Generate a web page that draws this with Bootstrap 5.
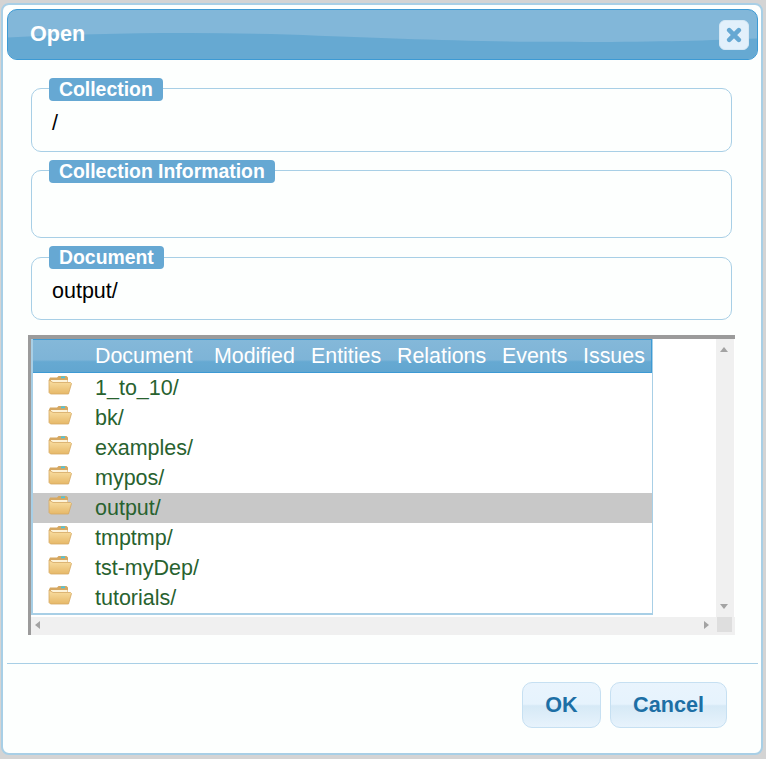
<!DOCTYPE html>
<html lang="en">
<head>
    <meta charset="UTF-8">
    <title>Open</title>
    <link href="https://cdn.jsdelivr.net/npm/bootstrap@5.3.0/dist/css/bootstrap.min.css" rel="stylesheet">
    <style>
        html, body { height: 759px; overflow: hidden; }
        body {
            background: #d4d4d4;
            font-family: "Liberation Sans", Arial, sans-serif;
            padding: 3px 3px 4px 1px;
        }
        .dialog-box {
            height: 752px;
            background: #fdfffe;
            border: 2px solid #a8cfe6;
            border-radius: 8px;
            padding: 4px 3px 0 4px;
        }
        .title-bar {
            position: relative;
            height: 51px;
            border: 1px solid #3d9ad4;
            border-radius: 10px;
            overflow: hidden;
            background: #82b7d9;
            color: #fff;
            font-size: 21.6px;
            font-weight: 700;
            padding: 0 8px 0 22px;
        }
        .title-wave { position: absolute; left: 0; top: 0; width: 100%; height: 100%; }
        .title-bar > span, .close-btn { position: relative; }
        .close-btn {
            width: 30px;
            height: 30px;
            padding: 0;
            border: 1px solid #d5e8f5;
            border-radius: 6px;
            background: #e2f0fb;
        }
        .field-box {
            margin: 0 26px 7px 24px;
            border: 1px solid #a8cfe6;
            border-radius: 10px;
            padding: 0 20px;
            font-size: 21.5px;
            color: #000;
        }
        .field-box legend {
            position: relative;
            top: 1px;
            float: none;
            width: auto;
            height: 23px;
            margin: 2px 0 0 -3px;
            padding: 0 10px;
            background: #66a8d3;
            border-radius: 4px;
            color: #fff;
            font-size: 19.4px;
            font-weight: 700;
            line-height: 23px;
        }
        .field-one { height: 75px; margin-top: 17px; }
        .field-two { height: 79px; margin-bottom: 8px; }
        .field-three { height: 74px; margin-bottom: 15px; }
        .field-three legend { top: 0; }
        .field-text { line-height: 24px; padding-top: 10px; }
        .field-one .field-text { padding-top: 11px; }
        .file-box {
            height: 300px;
            margin: 0 23px 0 21px;
            border-top: 4px solid #9b9b9b;
            border-left: 3px solid #9b9b9b;
            background: #fff;
        }
        .file-pane { height: 278px; }
        .file-table {
            width: 622px;
            height: 276px;
            border-collapse: separate;
            border-spacing: 0;
            border-left: 2px solid #a8cfe6;
            border-right: 1px solid #a8cfe6;
            border-bottom: 2px solid #a8cfe6;
            font-size: 21.5px;
            table-layout: fixed;
        }
        .file-table th {
            height: 34px;
            padding: 0;
            font-size: 21.4px;
            font-weight: 400;
            color: #fff;
            white-space: nowrap;
            border-top: 1px solid #3d9ad4;
            border-bottom: 1px solid #3d9ad4;
            background: linear-gradient(180deg, #84b8d9 0%, #7eb4d7 62%, #66a9d2 68%, #62a6d0 100%);
        }
        .file-table th:last-child { border-right: 1px solid #3d9ad4; }
        .file-table td {
            height: 30px;
            padding: 0;
            color: #28622f;
            line-height: 30px;
        }
        .file-table .picked td { background: #c8c8c8; }
        .folder-ico { display: block; margin: -7px 0 0 15px; }
        .v-track {
            width: 18px;
            background: #f0f0f0;
            margin-left: 63px;
            padding-right: 3px;
        }
        .h-track {
            height: 18px;
            background: #f0f0f0;
            padding-bottom: 3px;
        }
        .h-corner { width: 15px; margin-right: 3px; background: #dedede; }
        .arrow { display: block; }
        .rule { height: 1px; background: #a8cfe6; margin: 28px 0 18px 0; }
        .action-btn {
            height: 46px;
            padding: 0;
            border: 1px solid #c6e0f2;
            border-radius: 10px;
            background: linear-gradient(180deg, #e9f4fd 0%, #e6f3fd 48%, #d6e9f6 52%, #e7f3fc 100%);
            color: #1d6fa5;
            font-size: 21.6px;
            font-weight: 700;
        }
        .ok-btn { width: 79px; margin-right: 9px; }
        .cancel-btn { width: 117px; margin-right: 31px; }
    </style>
</head>
<body>
    <div class="dialog-box">
        <div class="title-bar d-flex align-items-center justify-content-between">
            <svg class="title-wave" viewBox="0 0 750 50" preserveAspectRatio="none"><path d="M0 28C80 24 180 22 280 25 380 29 450 32 550 32.5 640 33 700 31 750 29V50H0Z" fill="#66a9d2"/></svg>
            <span>Open</span>
            <button type="button" class="close-btn d-flex align-items-center justify-content-center" aria-label="Close">
                <svg width="16" height="16" viewBox="0 0 16 16"><path d="M3.2 3.2 12.8 12.8M12.8 3.2 3.2 12.8" stroke="#66a8d3" stroke-width="4.6" stroke-linecap="round"/></svg>
            </button>
        </div>

        <fieldset class="field-box field-one">
            <legend>Collection</legend>
            <div class="field-text">/</div>
        </fieldset>
        <fieldset class="field-box field-two">
            <legend>Collection Information</legend>
        </fieldset>
        <fieldset class="field-box field-three">
            <legend>Document</legend>
            <div class="field-text">output/</div>
        </fieldset>

        <div class="file-box d-flex flex-column">
            <div class="file-pane d-flex">
                <table class="file-table">
                    <colgroup>
                        <col style="width:62px"><col style="width:119px"><col style="width:97px"><col style="width:86px"><col style="width:105px"><col style="width:81px"><col>
                    </colgroup>
                    <thead>
                        <tr><th></th><th>Document</th><th>Modified</th><th>Entities</th><th>Relations</th><th>Events</th><th>Issues</th></tr>
                    </thead>
                    <tbody>
                        <tr><td><svg class="folder-ico" width="24" height="20"><use href="#folder"/></svg></td><td colspan="6">1_to_10/</td></tr>
                        <tr><td><svg class="folder-ico" width="24" height="20"><use href="#folder"/></svg></td><td colspan="6">bk/</td></tr>
                        <tr><td><svg class="folder-ico" width="24" height="20"><use href="#folder"/></svg></td><td colspan="6">examples/</td></tr>
                        <tr><td><svg class="folder-ico" width="24" height="20"><use href="#folder"/></svg></td><td colspan="6">mypos/</td></tr>
                        <tr class="picked"><td><svg class="folder-ico" width="24" height="20"><use href="#folder"/></svg></td><td colspan="6">output/</td></tr>
                        <tr><td><svg class="folder-ico" width="24" height="20"><use href="#folder"/></svg></td><td colspan="6">tmptmp/</td></tr>
                        <tr><td><svg class="folder-ico" width="24" height="20"><use href="#folder"/></svg></td><td colspan="6">tst-myDep/</td></tr>
                        <tr><td><svg class="folder-ico" width="24" height="20"><use href="#folder"/></svg></td><td colspan="6">tutorials/</td></tr>
                    </tbody>
                </table>
                <div class="v-track d-flex flex-column justify-content-between align-items-center">
                    <svg class="arrow mt-2" width="8" height="5"><path d="M0 5 4 0 8 5Z" fill="#a3a3a3"/></svg>
                    <svg class="arrow mb-2" width="8" height="5"><path d="M0 0 8 0 4 5Z" fill="#a3a3a3"/></svg>
                </div>
            </div>
            <div class="h-track d-flex">
                <div class="flex-grow-1 d-flex align-items-center justify-content-between px-1">
                    <svg class="arrow" width="5" height="8"><path d="M5 0 0 4 5 8Z" fill="#a3a3a3"/></svg>
                    <svg class="arrow me-1" width="5" height="8"><path d="M0 0 5 4 0 8Z" fill="#a3a3a3"/></svg>
                </div>
                <div class="h-corner"></div>
            </div>
        </div>

        <div class="rule"></div>
        <div class="d-flex justify-content-end">
            <button type="button" class="btn action-btn ok-btn">OK</button>
            <button type="button" class="btn action-btn cancel-btn">Cancel</button>
        </div>
    </div>

    <svg width="0" height="0" class="d-block">
        <defs>
            <linearGradient id="fold" x1="0" y1="0" x2="0" y2="1">
                <stop offset="0" stop-color="#fae0a4"/>
                <stop offset="1" stop-color="#e6b868"/>
            </linearGradient>
            <g id="folder">
                <path d="M1 4.5 2 2.5H9L10.5 1H18.5L20 2.5V7H1Z" fill="#d6a862"/>
                <rect x="13" y="1.4" width="4" height="1.8" fill="#4cc4dc"/>
                <path d="M3 5H19.5V8H3Z" fill="#fdf3d8"/>
                <path d="M1 5V17.5L2.5 19H20.5L23.5 8.5 22.5 7.5H5Z" fill="url(#fold)" stroke="#d6a862" stroke-width=".8"/>
            </g>
        </defs>
    </svg>
</body>
</html>
